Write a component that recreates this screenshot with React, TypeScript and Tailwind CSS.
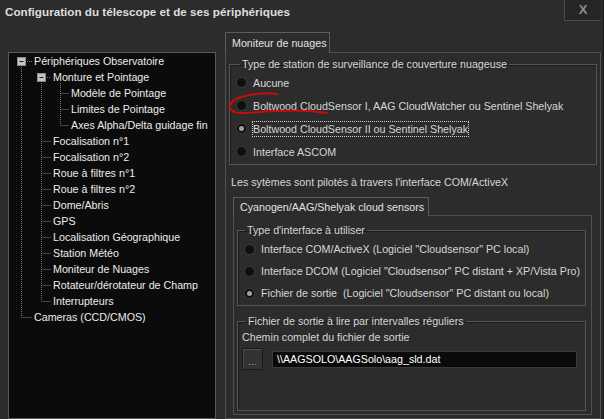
import React from 'react';

interface TreeItem {
  label: string;
  level: number;
}

const treeItems: TreeItem[] = [
  { label: 'Périphériques Observatoire', level: 0 },
  { label: 'Monture et Pointage', level: 1 },
  { label: 'Modèle de Pointage', level: 2 },
  { label: 'Limites de Pointage', level: 2 },
  { label: 'Axes Alpha/Delta guidage fin', level: 2 },
  { label: 'Focalisation n°1', level: 1 },
  { label: 'Focalisation n°2', level: 1 },
  { label: 'Roue à filtres n°1', level: 1 },
  { label: 'Roue à filtres n°2', level: 1 },
  { label: 'Dome/Abris', level: 1 },
  { label: 'GPS', level: 1 },
  { label: 'Localisation Géographique', level: 1 },
  { label: 'Station Météo', level: 1 },
  { label: 'Moniteur de Nuages', level: 1 },
  { label: 'Rotateur/dérotateur de Champ', level: 1 },
  { label: 'Interrupteurs', level: 1 },
  { label: 'Cameras (CCD/CMOS)', level: 0 },
];

const indent = ['pl-[25px]', 'pl-[44px]', 'pl-[62px]'];

// connector lines for the tree, coords relative to the panel content box
const TreeLines: React.FC = () => {
  const rowY = (i: number) => 8 + i * 16;
  const dot = { stroke: '#7c7c7c', strokeWidth: 1, strokeDasharray: '1 1' };
  return (
    <svg className="absolute left-0 top-0 pointer-events-none" width="206" height="300">
      {/* level 0 */}
      <line x1="12.5" y1={rowY(0) + 4} x2="12.5" y2={rowY(16)} {...dot} />
      <line x1="16" y1={rowY(0) + 0.5} x2="23" y2={rowY(0) + 0.5} {...dot} />
      <line x1="12.5" y1={rowY(16) + 0.5} x2="23" y2={rowY(16) + 0.5} {...dot} />
      {/* level 1 */}
      <line x1="32.5" y1={rowY(1) + 4} x2="32.5" y2={rowY(15)} {...dot} />
      {treeItems.map((it, i) =>
        it.level === 1 && i !== 1 ? (
          <line key={i} x1="32.5" y1={rowY(i) + 0.5} x2="42" y2={rowY(i) + 0.5} {...dot} />
        ) : null
      )}
      <line x1="36" y1={rowY(1) + 0.5} x2="42" y2={rowY(1) + 0.5} {...dot} />
      {/* level 2 */}
      <line x1="51.5" y1={rowY(1) + 6} x2="51.5" y2={rowY(4)} {...dot} />
      {[2, 3, 4].map((i) => (
        <line key={i} x1="51.5" y1={rowY(i) + 0.5} x2="60" y2={rowY(i) + 0.5} {...dot} />
      ))}
      {/* expanders */}
      {[
        [8.5, rowY(0) - 3.5],
        [28.5, rowY(1) - 3.5],
      ].map(([x, y], k) => (
        <g key={k}>
          <rect x={x} y={y} width="8" height="8" fill="#c4c4c4" stroke="#8a8a8a" />
          <line x1={x + 2} y1={y + 4} x2={x + 6} y2={y + 4} stroke="#1a1a1a" strokeWidth="1" />
        </g>
      ))}
    </svg>
  );
};

const Radio: React.FC<{ checked?: boolean }> = ({ checked }) => (
  <span className="w-[11px] h-[11px] rounded-full bg-[#0f0f0f] border border-[#3c3c3c] flex items-center justify-center shrink-0">
    {checked && <span className="w-[5px] h-[5px] rounded-full bg-[#a0a0a0]" />}
  </span>
);

const RadioRow: React.FC<{ label: string; checked?: boolean; focused?: boolean; tall?: boolean }> = ({
  label,
  checked,
  focused,
  tall,
}) => (
  <div className={`flex items-center pl-[6px] ${tall ? 'h-[23px]' : 'h-[22px]'}`}>
    <Radio checked={checked} />
    <span
      className={`ml-[6px] leading-[14px] whitespace-pre ${
        focused ? 'outline outline-1 outline-dotted outline-[#d0d0d0]' : ''
      }`}
    >
      {label}
    </span>
  </div>
);

export default function App() {
  return (
    <div
      className="relative w-[604px] h-[419px] overflow-hidden bg-[#2c2c2c] text-[#d6d6d6] text-[10.7px] border-r border-[#161616] flex flex-col"
      style={{ fontFamily: '"Liberation Sans", Arial, sans-serif' }}
    >
      {/* title bar */}
      <div className="h-[24px] flex justify-between shrink-0">
        <div className="pl-[5px] pt-[4px] font-bold text-[11.7px] leading-[16px] text-[#dedede] whitespace-nowrap">
          Configuration du télescope et de ses périphériques
        </div>
        <div className="w-[37px] h-[21px] mr-[2px] bg-[#262626] border-l border-b border-[#4c4c4c] flex items-center justify-center text-[#8c8c8c] font-bold text-[13px]">
          X
        </div>
      </div>

      <div className="flex flex-1 min-h-0">
        {/* tree */}
        <div className="ml-[8px] mt-[28px] w-[208px] bg-[#0b0b0b] border border-[#5a5a5a] relative text-[#ececec]">
          <TreeLines />
          {treeItems.map((it, i) => (
            <div key={i} className={`h-[16px] leading-[16px] whitespace-nowrap ${indent[it.level]}`}>
              {it.label}
            </div>
          ))}
        </div>

        {/* right side */}
        <div className="ml-[9px] mt-[8px] w-[376px] flex flex-col">
          <div className="w-[105px] h-[21px] border-t border-l border-r border-[#5c5c5c] pl-[6px] leading-[20px] text-[#e2e2e2] whitespace-nowrap relative z-10 bg-[#2c2c2c] -mb-px">
            Moniteur de nuages
          </div>
          <div className="flex-1 border border-[#505050] pt-[4px] pl-[3px] pr-[3px]">
            <fieldset className="h-[108px] border border-[#555555] shadow-[inset_1px_1px_0_#1c1c1c]">
              <legend className="ml-[10px] px-[2px] leading-[14px] whitespace-nowrap">
                Type de station de surveillance de couverture nuageuse
              </legend>
              <RadioRow tall label="Aucune" />
              <RadioRow tall label="Boltwood CloudSensor I, AAG CloudWatcher ou Sentinel Shelyak" />
              <RadioRow tall checked focused label="Boltwood CloudSensor II ou Sentinel Shelyak" />
              <RadioRow tall label="Interface ASCOM" />
            </fieldset>

            <div className="mt-[10px] ml-[2px] leading-[14px] whitespace-nowrap">
              Les sytèmes sont pilotés à travers l'interface COM/ActiveX
            </div>

            <div className="mt-[8px] ml-[4px] flex flex-col">
              <div className="w-[196px] h-[19px] border-t border-l border-r border-[#5c5c5c] pl-[6px] leading-[18px] text-[#e2e2e2] whitespace-nowrap relative z-10 bg-[#2c2c2c] -mb-px">
                Cyanogen/AAG/Shelyak cloud sensors
              </div>
              <div className="w-[359px] h-[200px] border border-[#505050] pt-[7px] pl-[3px]">
                <fieldset className="w-[349px] h-[83px] border border-[#555555] shadow-[inset_1px_1px_0_#1c1c1c]">
                  <legend className="ml-[7px] px-[2px] leading-[14px] whitespace-nowrap">Type d'interface à utiliser</legend>
                  <div className="pt-[1px]">
                    <RadioRow label={'Interface COM/ActiveX (Logiciel "Cloudsensor" PC local)'} />
                    <RadioRow label={'Interface DCOM (Logiciel "Cloudsensor" PC distant + XP/Vista Pro)'} />
                    <RadioRow checked label={'Fichier de sortie  (Logiciel "Cloudsensor" PC distant ou local)'} />
                  </div>
                </fieldset>

                <fieldset className="mt-[8px] w-[349px] h-[97px] border border-[#555555] shadow-[inset_1px_1px_0_#1c1c1c]">
                  <legend className="ml-[8px] px-[2px] leading-[14px] whitespace-nowrap">
                    Fichier de sortie à lire par intervalles réguliers
                  </legend>
                  <div className="pl-[4px] mt-[2px] leading-[14px]">Chemin complet du fichier de sortie</div>
                  <div className="pl-[4px] mt-[4px] flex items-center">
                    <div className="w-[21px] h-[22px] bg-[#333333] border border-[#1a1a1a] shadow-[inset_1px_1px_0_#4a4a4a] flex items-end justify-center pb-[4px] text-[#9a9a9a] leading-[8px]">
                      ...
                    </div>
                    <div className="ml-[9px] w-[305px] h-[17px] bg-[#0b0b0b] border border-[#3a3a3a] pl-[4px] leading-[15px] text-white whitespace-nowrap">
                      {'\\\\AAGSOLO\\AAGSolo\\aag_sld.dat'}
                    </div>
                  </div>
                </fieldset>
              </div>
            </div>
          </div>
        </div>
      </div>

      {/* red hand-drawn annotation */}
      <svg className="absolute left-0 top-0 pointer-events-none" width="604" height="419">
        <path
          d="M277 94 C262 92 241 95 233 101 C226 107 231 114 244 113 C266 112 292 108 327 113"
          fill="none"
          stroke="#c80c0c"
          strokeWidth="2"
          strokeLinecap="round"
        />
      </svg>
    </div>
  );
}
